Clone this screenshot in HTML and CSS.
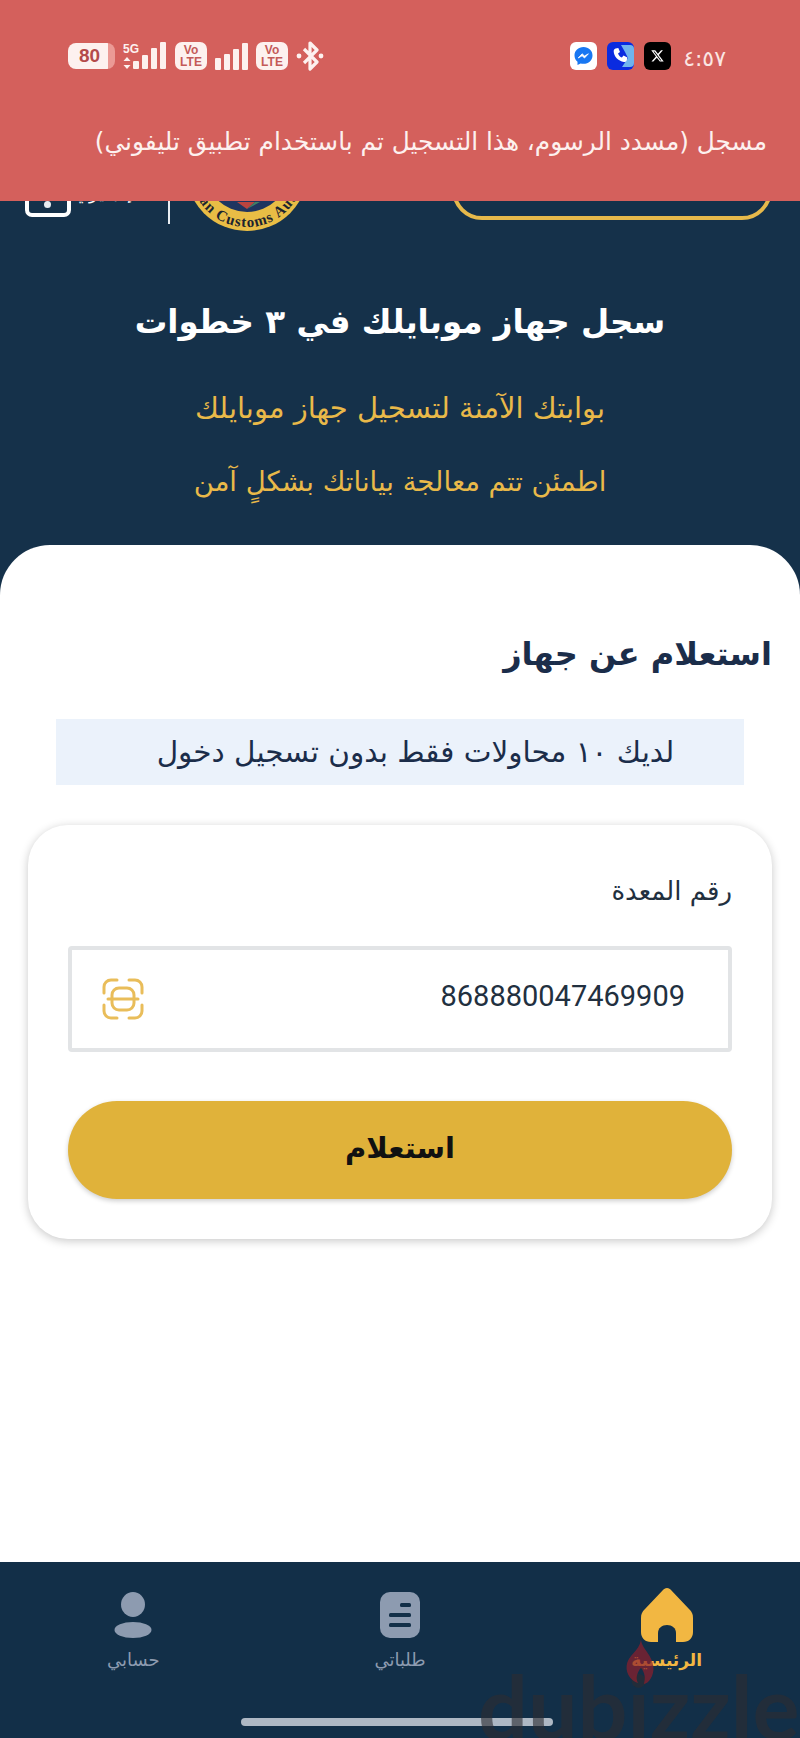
FILE: index.html
```html
<!DOCTYPE html>
<html lang="ar" dir="rtl">
<head>
   <meta charset="UTF-8">
   <meta name="viewport" content="width=device-width, initial-scale=1.0">
   <title>استعلام عن جهاز</title>
   <link rel="stylesheet" href="styles.css">
</head>
<body>

   <div class="page">

      <!-- Notification over the status bar -->
      <header class="banner">
         <div class="status" dir="ltr">
            <div class="status-left">
               <div class="battery"><span class="battery-level">80</span></div>
               <svg class="signal-5g" width="44" height="28" viewBox="0 0 44 28">
                  <text x="0" y="11" class="signal-text">5G</text>
                  <path d="M4 15l3.5 4h-7zM4 27l3.5-4h-7z" fill="#fdf1ef"/>
                  <rect x="10" y="19" width="6" height="8" rx="1" fill="#fdf1ef"/>
                  <rect x="19" y="13" width="6" height="14" rx="1" fill="#fdf1ef"/>
                  <rect x="28" y="6" width="6" height="21" rx="1" fill="#fdf1ef"/>
                  <rect x="37" y="0" width="6" height="27" rx="1" fill="#fdf1ef"/>
               </svg>
               <div class="volte">Vo<br>LTE</div>
               <svg class="bars" width="33" height="27" viewBox="0 0 33 27">
                  <rect x="0" y="15" width="6" height="12" rx="1" fill="#fdf1ef"/>
                  <rect x="9" y="11" width="6" height="16" rx="1" fill="#fdf1ef"/>
                  <rect x="18" y="6" width="6" height="21" rx="1" fill="#fdf1ef"/>
                  <rect x="27" y="0" width="6" height="27" rx="1" fill="#fdf1ef"/>
               </svg>
               <div class="volte">Vo<br>LTE</div>
               <svg class="bt" width="28" height="30" viewBox="0 0 28 30">
                  <path d="M8 8l13 13-7 7V2l7 7-13 13" fill="none" stroke="#fdf1ef" stroke-width="3.2" stroke-linejoin="round"/>
                  <circle cx="3" cy="15" r="2.4" fill="#fdf1ef"/>
                  <circle cx="25" cy="15" r="2.4" fill="#fdf1ef"/>
               </svg>
            </div>
            <div class="status-right">
               <svg class="app" width="27" height="28" viewBox="0 0 27 28">
                  <rect width="27" height="28" rx="6" fill="#fff"/>
                  <path d="M13.5 5C8.3 5 4.5 8.7 4.5 13.4c0 2.6 1.1 4.8 3 6.3v3.4l3.1-1.7c.9.2 1.9.4 2.9.4 5.2 0 9-3.7 9-8.4S18.700 5 13.5 5z" fill="#1877f2"/>
                  <path d="M8.200 16l3.900-4.200 2.400 2.200 3.900-2.200-3.900 4.200-2.400-2.200z" fill="#fff" stroke="#fff" stroke-width=".8" stroke-linejoin="round"/>
               </svg>
               <svg class="app" width="27" height="28" viewBox="0 0 27 28">
                  <rect width="27" height="28" rx="6" fill="#0a2be0"/>
                  <path d="M14 3h9a4 4 0 0 1 4 4v14a4 4 0 0 1-4 4h-8l6-9-3-6z" fill="#6fb4ee"/>
                  <path d="M8.500 6.500l2.800-.6 1.700 4-2 1.500c.7 1.900 2 3.300 3.900 4.100l1.600-1.900 3.900 1.800-.6 2.800c-.3 1.200-1.500 2-2.800 1.800C11 19 6.900 14.500 6.700 9.300c0-1.300.7-2.500 1.800-2.800z" fill="#fff"/>
               </svg>
               <svg class="app" width="27" height="28" viewBox="0 0 27 28">
                  <rect width="27" height="28" rx="6" fill="#000"/>
                  <g transform="translate(6.500 7) scale(.58)">
                     <path d="M18.200 2.200h3.300l-7.200 8.300 8.500 11.200h-6.700l-5.200-6.800-6 6.800H1.700l7.700-8.800L1.300 2.200h6.800l4.700 6.200zm-1.200 17.500h1.800L7.100 4.100H5.100z" fill="#fff"/>
                  </g>
               </svg>
               <span class="clock">٤:٥٧</span>
            </div>
         </div>
         <p class="banner-text">مسجل (مسدد الرسوم، هذا التسجيل تم باستخدام تطبيق تليفوني)</p>
      </header>

      <section class="hero">
         <!-- Site header, mostly hidden under the notification -->
         <div class="peek">
            <div class="peek-button"></div>
            <svg class="seal" width="122" height="122" viewBox="0 0 122 122">
               <circle cx="61" cy="61" r="61" fill="#e9bd45"/>
               <circle cx="61" cy="61" r="42" fill="#1f3560"/>
               <path d="M51 93l10 7 8-7z" fill="#b9443f"/>
               <path d="M61 100l8-7h5z" fill="#3f7f66"/>
               <defs><path id="seal-arc" d="M4 61a57 57 0 0 0 114 0"/></defs>
               <text class="seal-text" dir="ltr"><textPath href="#seal-arc" startOffset="50%" text-anchor="middle">Egyptian Customs Authority</textPath></text>
            </svg>
            <div class="peek-divider"></div>
            <span class="peek-lang">إنجليزي</span>
            <div class="peek-icon"><span class="peek-dot"></span></div>
         </div>

         <h1 class="hero-title">سجل جهاز موبايلك في ٣ خطوات</h1>
         <p class="hero-line">بوابتك الآمنة لتسجيل جهاز موبايلك</p>
         <p class="hero-line hero-line-last">اطمئن تتم معالجة بياناتك بشكلٍ آمن</p>
      </section>

      <main class="sheet">
         <h2 class="sheet-title">استعلام عن جهاز</h2>
         <div class="notice">لديك ١٠ محاولات فقط بدون تسجيل دخول</div>

         <div class="card">
            <label class="field-label">رقم المعدة</label>
            <div class="field">
               <span class="field-value">868880047469909</span>
               <svg class="scan" width="42" height="42" viewBox="0 0 42 42" fill="none" stroke="#e9bd5a" stroke-width="3" stroke-linecap="round">
                  <path d="M2 15V9a7 7 0 0 1 7-7h6M27 2h6a7 7 0 0 1 7 7v6M40 27v6a7 7 0 0 1-7 7h-6M15 40H9a7 7 0 0 1-7-7v-6"/>
                  <rect x="10" y="10" width="22" height="22" rx="7"/>
                  <path d="M6 21h30"/>
               </svg>
            </div>
            <button class="submit">استعلام</button>
         </div>
      </main>

      <nav class="tabs">
         <div class="tab-row">
            <a class="tab tab-active">
               <svg width="52" height="54" viewBox="0 0 52 54">
                  <path d="M26 0c2 0 3 1 4 2l18 19c3 3 4 5 4 9v14c0 6-4 10-10 10H10C4 54 0 50 0 44V30c0-4 1-6 4-9L22 2c1-1 2-2 4-2z" fill="#f2b742"/>
                  <path d="M17 54V45c0-5 4-8 9-8s9 3 9 8v9z" fill="#122f48"/>
               </svg>
               <span>الرئيسية</span>
            </a>
            <a class="tab">
               <svg width="40" height="46" viewBox="0 0 40 46">
                  <rect width="40" height="46" rx="10" fill="#8d9bb0"/>
                  <rect x="20" y="11" width="11" height="4" rx="1.500" fill="#122f48"/>
                  <rect x="9" y="21" width="22" height="4" rx="1.500" fill="#122f48"/>
                  <rect x="9" y="31" width="22" height="4" rx="1.500" fill="#122f48"/>
               </svg>
               <span>طلباتي</span>
            </a>
            <a class="tab">
               <svg width="38" height="46" viewBox="0 0 38 46">
                  <ellipse cx="19" cy="12.500" rx="12" ry="12.500" fill="#8d9bb0"/>
                  <ellipse cx="19" cy="38" rx="18.500" ry="8" fill="#8d9bb0"/>
               </svg>
               <span>حسابي</span>
            </a>
         </div>
         <div class="home-bar"></div>
         <span class="watermark" dir="ltr">dubizzle</span>
         <svg class="flame" width="30" height="44" viewBox="0 0 30 46">
            <path d="M16 0c1 9 12 16 13 28 1 9-5 18-10 18 2-6 1-12-3-17-4 5-6 11-3 16C7 44 0 36 1 27 2 16 14 12 16 0z" fill="#8f1f2c"/>
         </svg>
      </nav>

   </div>

</body>
</html>
```

FILE: styles.css
```css
* {
   box-sizing: border-box;
}

body {
   margin: 0;
   font-family: "DejaVu Sans", sans-serif;
}

.page {
   height: 1738px;
   display: flex;
   flex-direction: column;
   overflow: hidden;
   background: #15314a;
}

/* Banner */
.banner {
   height: 201px;
   flex: none;
   background: #d4605c;
   padding-top: 41px;
}

.status {
   display: flex;
   justify-content: space-between;
   align-items: center;
   padding: 0 74px 0 68px;
}

.status-left,
.status-right {
   display: flex;
   align-items: center;
}

.status-left {
   gap: 8px;
}

.status-right {
   gap: 10px;
}

.battery {
   width: 47px;
   height: 26px;
   border-radius: 8px;
   background: linear-gradient(to right, #fdf1ef 40px, #eb9a95 40px);
   display: flex;
   align-items: center;
   padding-left: 11px;
}

.battery-level {
   font-family: "Liberation Sans", sans-serif;
   font-size: 19px;
   font-weight: bold;
   color: #b44a4a;
}

.signal-text {
   font-family: "Liberation Sans", sans-serif;
   font-size: 12px;
   font-weight: bold;
   fill: #fdf1ef;
}

.volte {
   width: 32px;
   height: 28px;
   border-radius: 7px;
   background: #fdf1ef;
   color: #c45a58;
   font-family: "Liberation Sans", sans-serif;
   font-size: 12px;
   font-weight: bold;
   line-height: 12px;
   text-align: center;
   padding-top: 2px;
}

.clock {
   color: #fbe6e3;
   font-size: 22px;
   margin-left: 2px;
   margin-top: 4px;
}

.banner-text {
   margin: 51px 33px 0 0;
   color: #fdf1ef;
   font-size: 24.8px;
   line-height: 40px;
   white-space: nowrap;
}

/* Hero */
.hero {
   flex: none;
   height: 344px;
   background: #15314a;
   text-align: center;
}

.peek {
   height: 30px;
   display: flex;
   align-items: flex-end;
   overflow: hidden;
   padding-right: 28px;
}

.peek-button {
   width: 320px;
   height: 60px;
   flex: none;
   border: 4px solid #e6b94b;
   border-radius: 40px;
   margin-bottom: 11px;
   margin-left: 144px;
}

.seal {
   flex: none;
   margin-left: 16px;
}

.seal-text {
   font-family: "Liberation Serif", serif;
   font-size: 15px;
   font-weight: bold;
   letter-spacing: 1px;
   fill: #1c2430;
}

.peek-divider {
   width: 2px;
   height: 40px;
   flex: none;
   background: #e8edf2;
   margin-bottom: 7px;
   margin-left: 36px;
}

.peek-lang {
   color: #fff;
   font-size: 18px;
   line-height: 24px;
   flex: none;
   margin-bottom: 26px;
   margin-left: 4px;
}

.peek-icon {
   width: 46px;
   height: 40px;
   flex: none;
   border: 4px solid #fff;
   border-radius: 7px;
   margin-bottom: 14px;
   display: flex;
   justify-content: center;
   align-items: flex-end;
   padding-bottom: 5px;
}

.peek-dot {
   width: 7px;
   height: 7px;
   border-radius: 50%;
   background: #e8edf2;
}

.hero-title {
   margin: 66px 0 0;
   color: #fff;
   font-size: 32.5px;
   line-height: 50px;
   font-weight: bold;
}

.hero-line {
   margin: 41px 0 0;
   color: #e9b949;
   font-size: 29px;
   line-height: 40px;
}

.hero-line-last {
   margin-top: 33px;
   font-size: 27.5px;
}

/* Sheet */
.sheet {
   flex: 1;
   background: #fff;
   border-radius: 50px 50px 0 0;
   padding: 87px 28px 0;
}

.sheet-title {
   margin: 0;
   color: #1b2d4a;
   font-size: 32px;
   line-height: 44px;
   font-weight: bold;
}

.notice {
   margin: 43px 28px 0;
   height: 66px;
   background: #ebf2fb;
   color: #1b2d4a;
   font-size: 29.5px;
   display: flex;
   justify-content: center;
   align-items: center;
   padding-left: 31px;
}

.card {
   margin-top: 40px;
   height: 414px;
   background: #fff;
   border-radius: 40px;
   box-shadow: 0 2px 10px rgba(0, 0, 0, 0.22);
   padding: 46px 40px 0;
}

.field-label {
   display: block;
   color: #22303f;
   font-size: 26px;
   line-height: 40px;
}

.field {
   margin-top: 35px;
   height: 106px;
   border: 4px solid #e2e4e6;
   border-radius: 4px;
   display: flex;
   justify-content: space-between;
   align-items: center;
   padding: 0 43px 0 30px;
}

.field-value {
   color: #22303f;
   font-family: "Roboto", sans-serif;
   font-size: 29px;
   margin-bottom: 6px;
}

.submit {
   display: block;
   width: 100%;
   height: 98px;
   margin-top: 49px;
   border: none;
   border-radius: 49px;
   background: #e0b23a;
   box-shadow: 0 2px 5px rgba(0, 0, 0, 0.2);
   color: #111;
   font-family: inherit;
   font-size: 29px;
   font-weight: bold;
   padding-bottom: 6px;
}

/* Bottom tabs */
.tabs {
   flex: none;
   height: 176px;
   position: relative;
   overflow: hidden;
   background: #122f48;
}

.tab-row {
   display: grid;
   grid-template-columns: repeat(3, 1fr);
   height: 156px;
   padding-top: 26px;
}

.tab {
   display: flex;
   flex-direction: column;
   align-items: center;
   height: 100px;
   color: #8d9bb0;
   font-size: 18px;
   line-height: 24px;
}

.tab svg {
   margin: 4px 0 10px;
}

.tab-active {
   color: #f2b742;
   font-size: 17px;
   font-weight: bold;
}

.tab-active svg {
   margin: 0 0 6px;
}

.home-bar {
   width: 312px;
   height: 8px;
   margin: 0 247px 0 241px;
   border-radius: 4px;
   background: #aeb8c4;
}

.watermark {
   position: absolute;
   left: 478px;
   top: 84px;
   color: rgba(45, 45, 50, 0.62);
   font-family: "Lato", sans-serif;
   font-size: 88px;
   font-weight: bold;
   line-height: 120px;
}

.flame {
   position: absolute;
   left: 625px;
   top: 78px;
   opacity: 0.7;
}
```
